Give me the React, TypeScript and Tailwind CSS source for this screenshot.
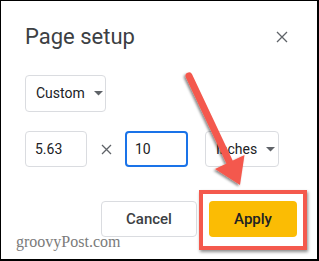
import React from 'react';

const ArrowOverlay: React.FC = () => {
    // shaft from (188,75) to head base, head tip at (239,183)
    return (
        <svg className="absolute inset-0 pointer-events-none" width="319" height="261" viewBox="0 0 319 261">
            <defs>
                <filter id="shadow" x="-20%" y="-20%" width="140%" height="140%">
                    <feDropShadow dx="-1.5" dy="1.5" stdDeviation="1.2" floodColor="#000" floodOpacity="0.45" />
                </filter>
            </defs>
            <g filter="url(#shadow)">
                <line x1="188" y1="75" x2="229" y2="162" stroke="#f4594d" strokeWidth="7" strokeLinecap="round" />
                <polygon points="239,184 243.5,154 214,168" fill="#f4594d" />
            </g>
        </svg>
    );
};

const Caret: React.FC = () => (
    <svg width="9" height="5" viewBox="0 0 9 5" className="text-[#5f6368] shrink-0">
        <path d="M0 0 L9 0 L4.5 4.5 Z" fill="currentColor" />
    </svg>
);

const App: React.FC = () => {
    return (
        <div className="relative w-[319px] h-[261px] bg-white border-black border-t border-l border-r-2 border-b-2 overflow-hidden font-['Roboto',sans-serif] text-[#202124]">
            <div className="flex flex-col pl-[24px] pr-[20px] pt-[22px]">
                <div className="flex items-center justify-between h-[28px]">
                    <h1 className="text-[22px] leading-[28px] text-[#3c4043]">Page setup</h1>
                    <svg width="12" height="12" viewBox="0 0 12 12" className="mr-[9px] mt-[-1px]">
                        <path d="M1 1 L11 11 M11 1 L1 11" stroke="#5f6368" strokeWidth="1.3" />
                    </svg>
                </div>

                <div className="mt-[24px] flex">
                    <div className="h-[37px] w-[81px] flex items-center gap-[9px] pl-[10px] border border-[#dadce0] rounded-[4px] text-[14px]">
                        <span>Custom</span>
                        <Caret />
                    </div>
                </div>

                <div className="mt-[19px] flex items-center h-[36px]">
                    <div className="h-[36px] w-[62px] flex items-center pl-[9px] border border-[#dadce0] rounded-[4px] text-[14px]">
                        5.63
                    </div>
                    <div className="w-[38px] flex justify-center">
                        <svg width="11" height="11" viewBox="0 0 11 11">
                            <path d="M1 1 L10 10 M10 1 L1 10" stroke="#5f6368" strokeWidth="1.3" />
                        </svg>
                    </div>
                    <div className="h-[36px] w-[63px] flex items-center pl-[8px] border-2 border-[#1a73e8] rounded-[4px] text-[14px]">
                        10
                    </div>
                    <div className="ml-[17px] h-[36px] w-[74px] flex items-center gap-[9px] pl-[10px] border border-[#dadce0] rounded-[4px] text-[14px]">
                        <span>Inches</span>
                        <Caret />
                    </div>
                </div>

                <div className="mt-[34px] flex justify-end gap-[12px]">
                    <button className="h-[36px] w-[96px] border border-[#dadce0] rounded-[4px] text-[15px] font-medium text-[#3c4043] bg-white">
                        Cancel
                    </button>
                    <button className="h-[36px] w-[88px] rounded-[4px] text-[15px] font-medium text-[#202124] bg-[#fbbc04]">
                        Apply
                    </button>
                </div>
            </div>

            <div className="absolute left-[198px] top-[189px] w-[108px] h-[60px] border-4 border-[#f4594d] shadow-[1px_2px_3px_rgba(0,0,0,0.45)] pointer-events-none" />

            <span className="absolute left-[15px] top-[232px] font-['Liberation_Serif',serif] text-[16px] leading-[18px] text-[#7a7a7a]">
                groovyPost.com
            </span>

            <ArrowOverlay />
        </div>
    );
};

export default App;
